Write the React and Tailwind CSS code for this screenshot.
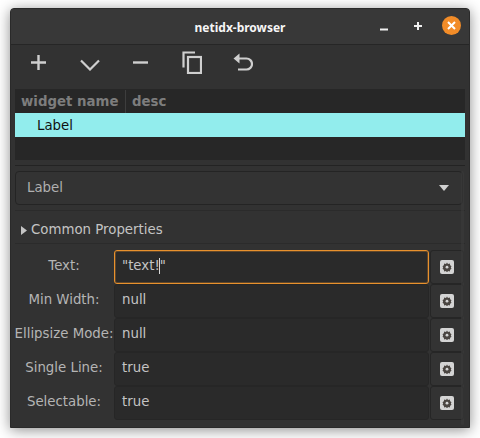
import { useState } from 'react'

const FONT = "font-['DejaVu_Sans','Noto_Sans',sans-serif]"

const PROPS = [
  { label: 'Text:', value: '"text!"', focused: true },
  { label: 'Min Width:', value: 'null' },
  { label: 'Ellipsize Mode:', value: 'null' },
  { label: 'Single Line:', value: 'true' },
  { label: 'Selectable:', value: 'true' },
]

// ─── Toolbar icons ───────────────────────────────────────────────────────────
function PlusIcon() {
  return (
    <svg width="15" height="15" viewBox="0 0 15 15" fill="none" stroke="#cfcfcf" strokeWidth="2.4">
      <path d="M7.5 0v15M0 7.5h15" />
    </svg>
  )
}

function ChevronIcon() {
  return (
    <svg width="20" height="12" viewBox="0 0 20 12" fill="none" stroke="#cfcfcf" strokeWidth="2.2" className="mt-[4px]">
      <path d="M1 1.5l9 9 9-9" />
    </svg>
  )
}

function MinusIcon() {
  return (
    <svg width="15" height="15" viewBox="0 0 15 15" fill="none" stroke="#cfcfcf" strokeWidth="2.4">
      <path d="M0 7.5h15" />
    </svg>
  )
}

function CopyIcon() {
  return (
    <svg width="20" height="23" viewBox="0 0 20 23" fill="none" stroke="#cfcfcf" strokeWidth="2.2">
      <path d="M13 1.5H1.5v15" />
      <rect x="6" y="6" width="13" height="16" />
    </svg>
  )
}

function UndoIcon() {
  return (
    <svg width="20" height="20" viewBox="0 0 20 20" fill="none">
      <path d="M5 5.5h8.5a5 5 0 0 1 0 11H5" stroke="#cfcfcf" strokeWidth="2.2" />
      <path d="M0.5 5.5L6.5 0.5v10z" fill="#cfcfcf" />
    </svg>
  )
}

// ─── Gear button in each property row ────────────────────────────────────────
function GearBadge() {
  return (
    <span className="flex h-[14px] w-[14px] items-center justify-center rounded-[2px] bg-[#d4d4d4]">
      <svg width="10" height="10" viewBox="0 0 10 10">
        <path d="M5 0.5l1 1.4 1.8-.4.4 1.8 1.3.9-.7 1.3.7 1.3-1.3.9-.4 1.8-1.8-.4-1 1.4-1-1.4-1.8.4-.4-1.8-1.3-.9.7-1.3-.7-1.3 1.3-.9.4-1.8 1.8.4z" fill="#4a4541" />
        <circle cx="5" cy="5.2" r="1.4" fill="#d4d4d4" />
      </svg>
    </span>
  )
}

function PropRow({ label, value, focused }) {
  return (
    <div className="flex h-[34px] items-stretch">
      <div className="flex w-[99px] shrink-0 items-center justify-center whitespace-nowrap pb-[2px] pr-[1px] text-[13.33px] text-[#b5b5b5]">
        {label}
      </div>
      <div
        className={
          focused
            ? 'flex w-[315px] items-center rounded-[3px] border border-[#e8912d] bg-[#2a2a2a] px-[7px] pb-[2px] text-[13.33px] text-[#c4c4c4] shadow-[inset_0_0_0_1px_rgba(224,138,44,0.3)]'
            : 'flex w-[315px] items-center rounded-[3px] border border-[#262626] bg-[#2a2a2a] px-[7px] pb-[2px] text-[13.33px] text-[#c4c4c4]'
        }
      >
        {focused ? (
          <span className="flex items-center">
            "text!
            <span className="mx-[-0.5px] h-[16px] w-px bg-[#d8d8d8]" />
            "
          </span>
        ) : (
          value
        )}
      </div>
      <div className="ml-px flex w-[34px] items-center justify-center rounded-[3px] border border-[#262626] bg-[#333333]">
        <GearBadge />
      </div>
    </div>
  )
}

// ─── Main export ─────────────────────────────────────────────────────────────
export default function App() {
  const [selected] = useState('Label')

  return (
    <div className={`h-[438px] w-[480px] overflow-hidden bg-white pl-[10px] pt-[8px] ${FONT}`}>
      <div className="relative flex h-[420px] w-[460px] flex-col rounded-t-[4px] border border-[#2a2a2a] bg-[#323232] shadow-[0_2px_14px_rgba(0,0,0,0.45)]">
        {/* Title bar */}
        <div className="relative flex h-[36px] shrink-0 items-center justify-center border-b border-[#262626] bg-[#383838] pt-[2px]">
          <span className="font-['Noto_Sans',sans-serif] text-[12px] font-bold text-[#f6f6f6]">netidx-browser</span>
          <div className="absolute right-[8px] top-[7px] flex items-center">
            <svg width="10" height="10" viewBox="0 0 10 10" className="mr-[24px] mt-[1px]">
              <path d="M1 8.5h8" stroke="#f0f0f0" strokeWidth="2" />
            </svg>
            <svg width="10" height="10" viewBox="0 0 10 10" className="mr-[19px]">
              <path d="M5 1v8M1 5h8" stroke="#f0f0f0" strokeWidth="2" />
            </svg>
            <span className="flex h-[19px] w-[19px] items-center justify-center rounded-full bg-[#f28c28]">
              <svg width="9" height="9" viewBox="0 0 9 9">
                <path d="M1 1l7 7M8 1l-7 7" stroke="#fff" strokeWidth="2" />
              </svg>
            </span>
          </div>
        </div>

        {/* Toolbar */}
        <div className="flex h-[44px] shrink-0 items-center pb-[9px] pl-[2px] text-[#cfcfcf]">
          <span className="flex w-[51px] justify-center"><PlusIcon /></span>
          <span className="flex w-[51px] justify-center"><ChevronIcon /></span>
          <span className="flex w-[51px] justify-center"><MinusIcon /></span>
          <span className="flex w-[51px] justify-center"><CopyIcon /></span>
          <span className="flex w-[51px] justify-center"><UndoIcon /></span>
        </div>

        {/* Widget tree */}
        <div className="mx-[4px] h-[71px] shrink-0 bg-[#272727]">
          <div className="flex h-[24px] items-center pt-[1px] text-[13.33px] font-bold text-[#7d7d7d]">
            <span className="w-[111px] border-r border-[#3d3d3d] pl-[6px] leading-[23px]">widget name</span>
            <span className="pl-[6px]">desc</span>
          </div>
          <div className="flex h-[24px] items-center bg-[#92eded] pl-[22px] pt-[1px] text-[13.33px] text-[#111111]">
            {selected}
          </div>
        </div>

        <div className="mx-[4px] mt-[5px] h-px shrink-0 bg-[#232323]" />

        {/* Widget kind combo */}
        <div className="ml-[4px] mr-[6px] mt-[5px] flex h-[34px] shrink-0 items-center justify-between rounded-[4px] border border-[#242424] bg-[#333333] pl-[11px] pr-[13px] text-[13.33px] text-[#b0b0b0]">
          Label
          <svg width="10" height="6" viewBox="0 0 10 6">
            <path d="M0 0h10L5 6z" fill="#d0d0d0" />
          </svg>
        </div>

        <div className="mx-[4px] mt-[5px] h-px shrink-0 bg-[#2b2b2b]" />

        {/* Common properties */}
        <div className="ml-[10px] mt-[10px] flex h-[18px] shrink-0 items-center text-[13.33px] text-[#c4c4c4]">
          <svg width="6" height="9" viewBox="0 0 6 9" className="mr-[4px]">
            <path d="M0 0l6 4.5L0 9z" fill="#c4c4c4" />
          </svg>
          Common Properties
        </div>

        <div className="mx-[4px] mt-[4px] h-px shrink-0 bg-[#2b2b2b]" />

        <div className="ml-[4px] mt-[6px] flex flex-col">
          {PROPS.map((p) => (
            <PropRow key={p.label} {...p} />
          ))}
        </div>

        {/* Scrollbar trough */}
        <span className="absolute right-[5px] top-[162px] h-[254px] w-[3px] rounded-full bg-[#3a3a3a]/60" />
      </div>
    </div>
  )
}
